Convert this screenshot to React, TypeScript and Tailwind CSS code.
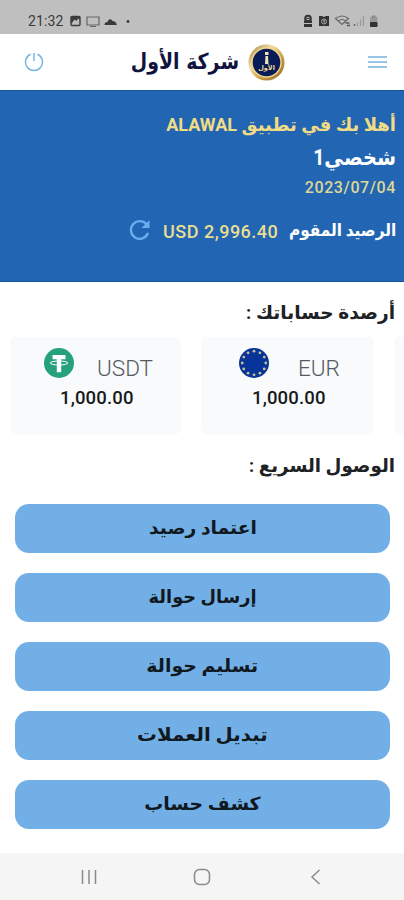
import type { ReactNode } from "react";

const quickActions = [
  { label: "اعتماد رصيد", stretch: "scale-x-[1.04]" },
  { label: "إرسال حوالة", stretch: "scale-x-[0.99]" },
  { label: "تسليم حوالة", stretch: "scale-x-[1.05]" },
  { label: "تبديل العملات", stretch: "scale-x-[1.1]" },
  { label: "كشف حساب", stretch: "scale-x-[1.05]" },
];

const stars = Array.from({ length: 12 }, (_, i) => {
  const angle = (i * Math.PI) / 6;
  return { x: 15 + 11.8 * Math.sin(angle), y: 15 - 11.8 * Math.cos(angle) };
});

function StatusBar() {
  return (
    <div
      dir="ltr"
      className="flex h-[34px] items-center justify-between bg-[#bfbfbf] pt-[7px] pr-[25px] pl-[28px] text-[#3a3a3a]"
    >
      <div className="flex items-center">
        <span className="w-[42px] text-[14px] leading-none tracking-[0.1px]">21:32</span>
        <svg width="64" height="14" viewBox="0 0 64 14" fill="none">
          <rect x="1" y="2.5" width="9" height="9" rx="1" stroke="currentColor" strokeWidth="1.4" />
          <path d="M1 2h9v4L8 4.500 6.500 7 4.500 5.500 2 9H1z" fill="currentColor" />
          <path d="M17 3h12v8H17zM20 12.500h6" stroke="#666" strokeWidth="1.2" />
          <path d="M34.500 11c0-2 1-3 3-3 1-3.500 3.500-3.500 5-1 2.500 0 4 2 4.500 4z" fill="currentColor" />
          <circle cx="58" cy="7.500" r="1.400" fill="currentColor" />
        </svg>
      </div>
      <svg width="76" height="16" viewBox="0 0 76 16" fill="none">
        <circle cx="5" cy="5.500" r="2.800" stroke="#333" strokeWidth="2" />
        <path d="M1 7.500h8V10H1zM1 11h8v3H1z" fill="#333" />
        <path d="M3.500 5.500h3" stroke="#333" />
        <path d="M16 3h3l2 1 2-1h3v10H16z" fill="#333" />
        <circle cx="21" cy="8.500" r="2.500" stroke="#aaa" />
        <path d="M21 7v2h1" stroke="#ccc" />
        <path d="M32.500 5.500q6.500-5 13 0l-6.500 6z M35.500 8q3.500-3 7 0" stroke="#666" strokeWidth="1.200" />
        <path d="M42.500 10h4M44 12.500h3" stroke="#555" strokeWidth="1.500" />
        <path d="M51.500 11v2" stroke="#666" strokeWidth="1.500" />
        <path d="M54.500 9.500V13M57.500 6.500V13M60.500 3v10" stroke="#999" strokeWidth="1.200" />
        <rect x="67" y="3.500" width="7.500" height="10" rx="1.500" fill="#999" />
        <path d="M69 2.500h3.500v2H69z" fill="#888" />
        <rect x="67" y="9" width="7.500" height="5" rx="1" fill="#333" />
      </svg>
    </div>
  );
}

function Logo() {
  return (
    <svg width="37" height="37" viewBox="0 0 37 37">
      <defs>
        <linearGradient id="gold" x1="0" y1="0" x2="1" y2="1">
          <stop offset="0" stopColor="#9b7a35" />
          <stop offset=".35" stopColor="#f5dda0" />
          <stop offset=".65" stopColor="#c79b45" />
          <stop offset="1" stopColor="#8b6527" />
        </linearGradient>
      </defs>
      <circle cx="18.500" cy="18.500" r="18" fill="url(#gold)" />
      <circle cx="18.500" cy="18.500" r="15.200" fill="#f0d590" />
      <circle cx="18.500" cy="18.500" r="13.800" fill="#081c58" />
      <path d="M17 8h3.500v3H17zM17.500 12h2.500l.5 8h-3.500z" fill="#f4e2b5" />
      <text
        x="18.500"
        y="26"
        textAnchor="middle"
        direction="rtl"
        fontSize="6.500"
        fontWeight="700"
        fill="#f0d590"
        fontFamily="DejaVu Sans, sans-serif"
      >
        الأول
      </text>
    </svg>
  );
}

function Header() {
  return (
    <header dir="ltr" className="flex h-[56px] items-center bg-white pr-[17px] pl-[24px]">
      <svg width="20" height="20" viewBox="0 0 20 20" fill="none" stroke="#79b7e3" strokeWidth="1.500">
        <path d="M6.500 2.300a8.500 8.500 0 1 0 7 0M10 1v8" />
      </svg>
      <div className="ml-[87px] flex flex-1 items-center">
        <h1
          dir="rtl"
          className="w-[108px] text-center font-['DejaVu_Sans',sans-serif] text-[22px] leading-[40px] font-bold whitespace-nowrap text-[#11133f]"
        >
          <span className="-mx-8 inline-block scale-x-[0.86]">شركة الأول</span>
        </h1>
        <div className="ml-[9px]">
          <Logo />
        </div>
      </div>
      <svg width="19" height="14" viewBox="0 0 19 14" stroke="#79b1dc" strokeWidth="1.600">
        <path d="M0 2h19M0 7h19M0 12h19" />
      </svg>
    </header>
  );
}

function Hero() {
  return (
    <section className="flex h-[192px] flex-col border-y border-[#12549c] bg-[#2265b3] pr-[8px] font-bold text-white">
      <p className="mt-[19px] h-[30px] text-[18px] leading-[30px] whitespace-nowrap text-[#f1dc86]">
        أهلا بك في تطبيق ALAWAL
      </p>
      <p className="mt-[2px] h-[32px] origin-right scale-x-[0.88] text-[22px] leading-[32px]">شخصي1</p>
      <p className="mt-[3px] h-[22px] text-[16px] leading-[22px] font-medium tracking-[0.6px] text-[#dfd795]">
        2023/07/04
      </p>
      <div className="mt-[19px] flex h-[26px] items-center">
        <span className="w-[109px] text-[17px] whitespace-nowrap">
          <span className="inline-block origin-right scale-x-[0.9]">الرصيد المقوم</span>
        </span>
        <span
          dir="ltr"
          className="mr-[7px] w-[117px] text-[18px] font-medium tracking-[0.5px] whitespace-nowrap text-[#e9de92]"
        >
          USD 2,996.40
        </span>
        <svg className="-mt-[3px] mr-[12px]" width="22" height="22" viewBox="0 0 22 22" fill="none">
          <path d="M18 6A8.800 8.800 0 1 0 19 14" stroke="#6aaef0" strokeWidth="2.300" />
          <path d="M20.500 1v8h-8z" fill="#6aaef0" />
        </svg>
      </div>
    </section>
  );
}

function TetherIcon() {
  return (
    <svg width="30" height="30" viewBox="0 0 30 30" fill="none">
      <circle cx="15" cy="15" r="15" fill="#25a17b" />
      <path d="M8.500 7h13v4.300h-4.300v13h-4.400v-13H8.500z" fill="white" />
      <ellipse cx="15" cy="15" rx="8.800" ry="2" stroke="white" strokeWidth="1" />
    </svg>
  );
}

function EuroIcon() {
  return (
    <svg width="30" height="30" viewBox="0 0 30 30">
      <circle cx="15" cy="15" r="15" fill="#083399" />
      {stars.map((star, i) => (
        <circle key={i} cx={star.x} cy={star.y} r="1.400" fill="#c5c190" />
      ))}
    </svg>
  );
}

type BalanceCardProps = {
  code: string;
  amount: string;
  icon: ReactNode;
  className: string;
  codeClassName: string;
};

function BalanceCard({ code, amount, icon, className, codeClassName }: BalanceCardProps) {
  return (
    <div dir="ltr" className={`h-[97px] shrink-0 rounded-md bg-[#f8fafc] pt-[11px] ${className}`}>
      <div className="flex h-[30px]">
        {icon}
        <span className={`pt-[6px] text-[22.5px] leading-[28px] font-light text-[#555961] ${codeClassName}`}>
          {code}
        </span>
      </div>
      <p className="mt-[8px] text-[18.5px] leading-[24px] font-medium tracking-[0.15px] text-[#17181b]">{amount}</p>
    </div>
  );
}

function Balances() {
  return (
    <section>
      <h2 className="mt-[15px] h-[32px] pr-[9px] text-[19px] leading-[32px] font-bold text-[#202124]">
        <span className="inline-block origin-right scale-x-[0.98]">أرصدة حساباتك :</span>
      </h2>
      <div className="mt-[8px] flex gap-[20px] overflow-hidden">
        <div className="h-[97px] w-[10px] shrink-0 rounded-l-md bg-[#f8fafc]" />
        <BalanceCard
          code="EUR"
          amount="1,000.00"
          icon={<EuroIcon />}
          className="w-[173px] pl-[38px] [&>p]:pl-[13px]"
          codeClassName="ml-[29px]"
        />
        <BalanceCard
          code="USDT"
          amount="1,000.00"
          icon={<TetherIcon />}
          className="w-[171px] pl-[34px] [&>p]:pl-[16px]"
          codeClassName="ml-[23px]"
        />
      </div>
    </section>
  );
}

function QuickAccess() {
  return (
    <section>
      <h2 className="mt-[16px] h-[32px] pr-[9px] text-[19px] leading-[32px] font-bold text-[#202124]">
        <span className="inline-block origin-right scale-x-[0.96]">الوصول السريع :</span>
      </h2>
      <div className="mt-[22px] flex flex-col gap-[20px] pr-[14px] pl-[15px]">
        {quickActions.map((action) => (
          <button
            key={action.label}
            type="button"
            className="h-[49px] rounded-[14px] bg-[#73afe7] pb-[2px] text-[18px] font-bold text-[#101820]"
          >
            <span className={`inline-block ${action.stretch}`}>{action.label}</span>
          </button>
        ))}
      </div>
    </section>
  );
}

function NavigationBar() {
  return (
    <nav dir="ltr" className="mt-auto flex h-[47px] items-center bg-[#f5f5f5] pl-[81px]">
      <svg width="16" height="16" viewBox="0 0 16 16" stroke="#8b8b8b" strokeWidth="1.500">
        <path d="M1.500 1v14M8 1v14M14.500 1v14" />
      </svg>
      <svg
        className="ml-[96px]"
        width="18"
        height="18"
        viewBox="0 0 18 18"
        fill="none"
        stroke="#8b8b8b"
        strokeWidth="1.500"
      >
        <rect x="1.500" y="1.500" width="15" height="15" rx="5" />
      </svg>
      <svg
        className="ml-[98px]"
        width="12"
        height="16"
        viewBox="0 0 12 16"
        fill="none"
        stroke="#8b8b8b"
        strokeWidth="1.500"
      >
        <path d="M10.500 1L3 8l7.500 7" />
      </svg>
    </nav>
  );
}

export default function App() {
  return (
    <main
      dir="rtl"
      className="flex h-[900px] w-[404px] flex-col overflow-hidden bg-white font-[Roboto,'DejaVu_Sans',sans-serif]"
    >
      <StatusBar />
      <Header />
      <Hero />
      <Balances />
      <QuickAccess />
      <NavigationBar />
    </main>
  );
}
